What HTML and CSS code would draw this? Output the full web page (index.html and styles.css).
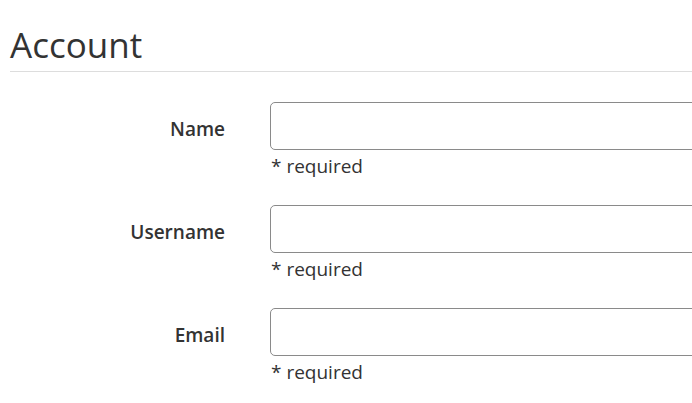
FILE: index.html
```html
<!DOCTYPE html>
<html lang="en">
<head>
    <meta charset="UTF-8">
    <meta name="viewport" content="width=device-width, initial-scale=1.0">
    <title>Account</title>
    <link rel="stylesheet" href="styles.css">
</head>
<body>
    <div class="page">
        <h1 class="title">Account</h1>
        <form class="account-form">
            <div class="form-row">
                <label class="form-label" for="name">Name</label>
                <div class="form-field">
                    <input class="form-input" type="text" id="name">
                    <div class="hint">* required</div>
                </div>
            </div>
            <div class="form-row">
                <label class="form-label" for="username">Username</label>
                <div class="form-field">
                    <input class="form-input" type="text" id="username">
                    <div class="hint">* required</div>
                </div>
            </div>
            <div class="form-row">
                <label class="form-label" for="email">Email</label>
                <div class="form-field">
                    <input class="form-input" type="email" id="email">
                    <div class="hint">* required</div>
                </div>
            </div>
        </form>
    </div>
</body>
</html>
```

FILE: styles.css
```css
body {
    font-family: "Open Sans", "Noto Sans", sans-serif;
    color: #333;
    background-color: #fff;
    margin: 0;
    overflow: hidden;
}
.page {
    padding: 0 0 0 10px;
}
.title {
    font-size: 35px;
    font-weight: 400;
    line-height: 42px;
    margin: 0;
    padding: 24px 0 5px;
    border-bottom: 1px solid #ddd;
}
.account-form {
    padding-top: 30px;
}
.form-row {
    display: grid;
    grid-template-columns: 215px 1fr;
    column-gap: 45px;
    margin-bottom: 22px;
}
.form-label {
    text-align: right;
    font-size: 19px;
    font-weight: 600;
    line-height: 54px;
}
.form-field {
    display: flex;
    flex-direction: column;
}
.form-input {
    width: 500px;
    height: 48px;
    box-sizing: border-box;
    border: 1px solid #8a8a8a;
    border-radius: 5px;
    padding: 6px 12px;
    font-size: 19px;
}
.hint {
    font-size: 19px;
    line-height: 33px;
    padding-left: 1px;
}
```
